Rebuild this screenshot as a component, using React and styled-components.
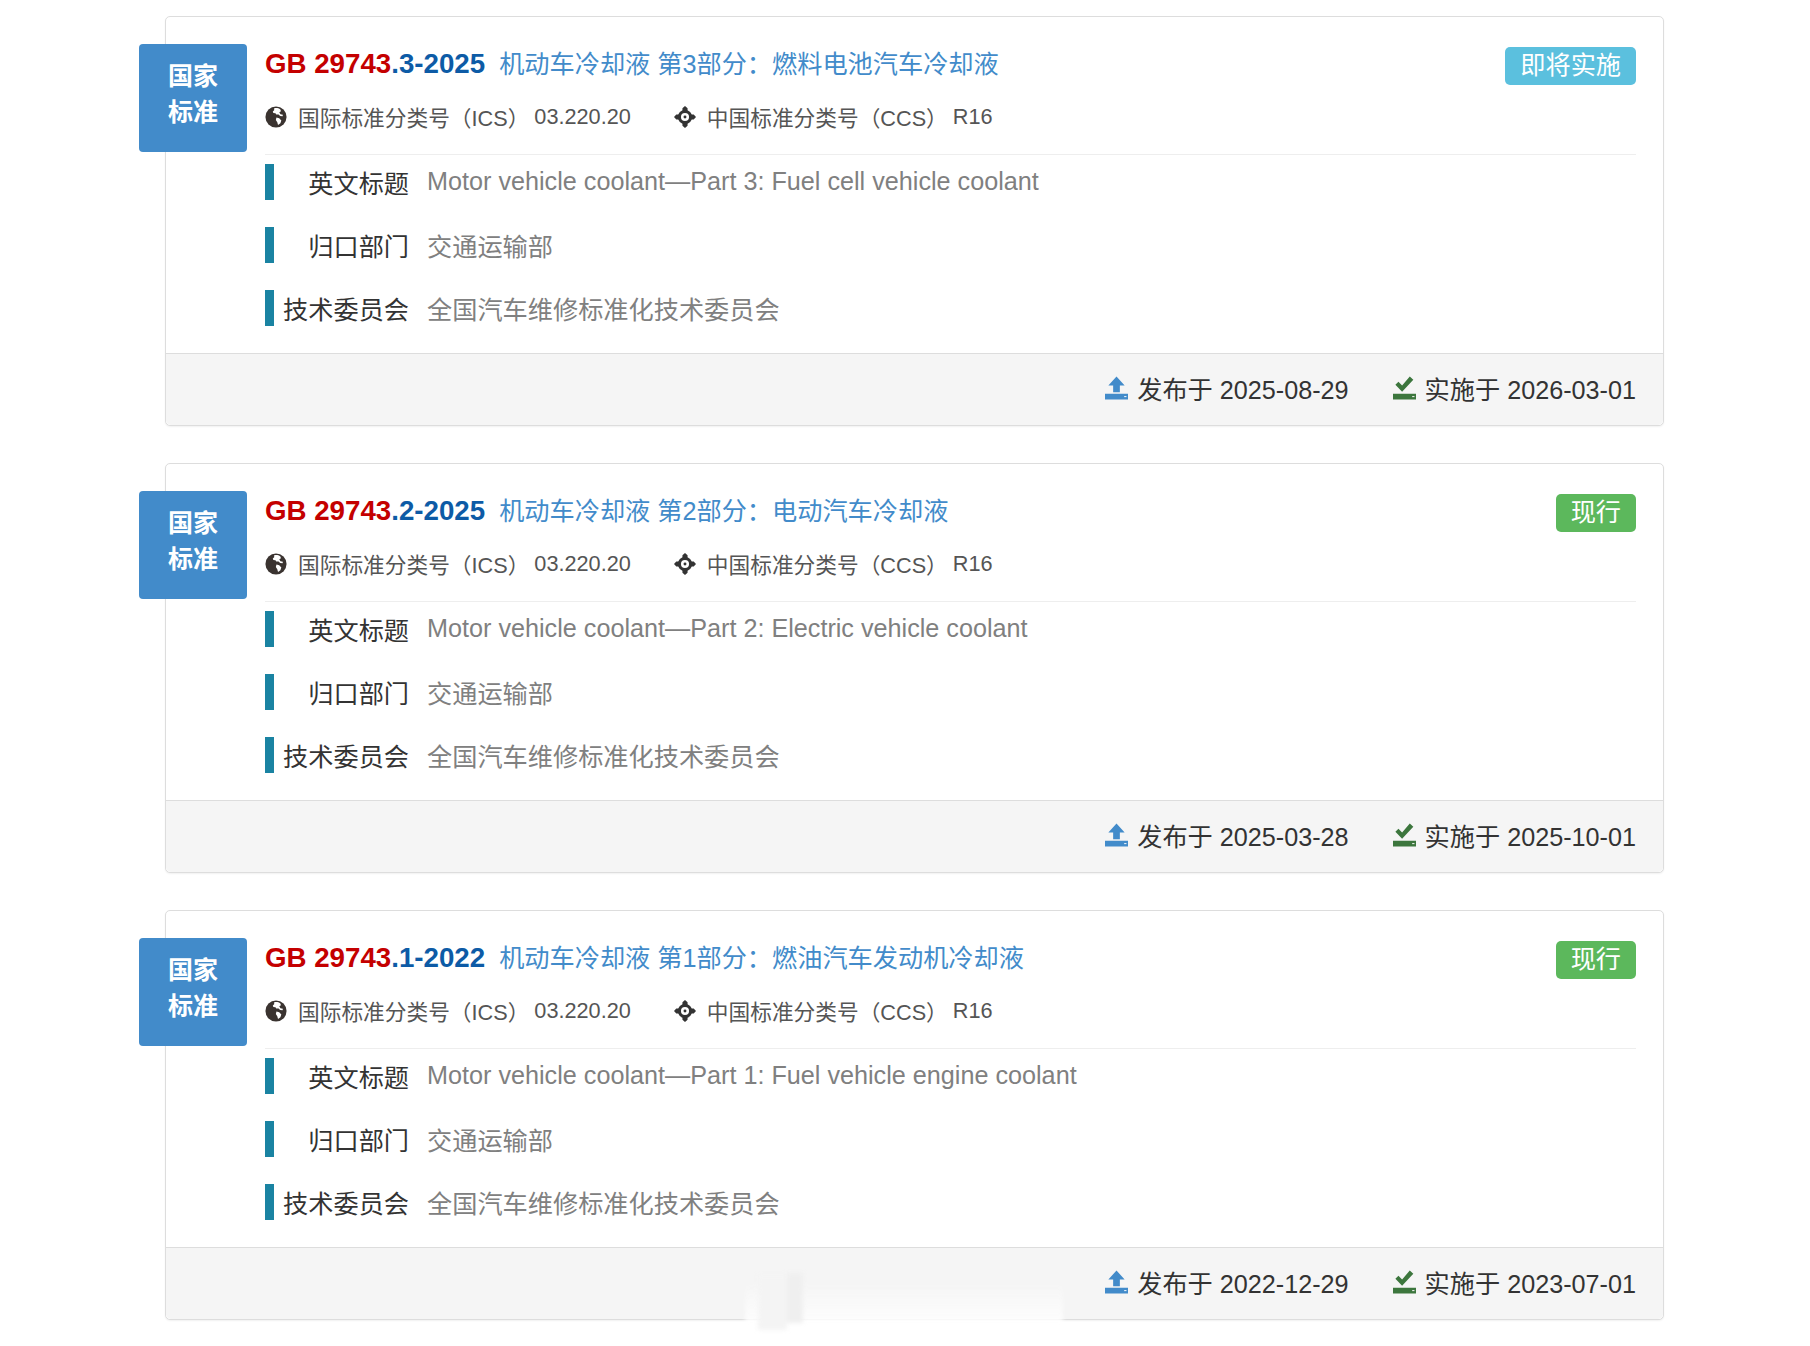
import React from 'react';
import styled, { createGlobalStyle } from 'styled-components';

const standards = [
  {
    prefix: 'GB 29743',
    suffix: '.3-2025',
    title: '机动车冷却液 第3部分：燃料电池汽车冷却液',
    english: 'Motor vehicle coolant—Part 3: Fuel cell vehicle coolant',
    status: '即将实施',
    tone: 'info',
    published: '2025-08-29',
    effective: '2026-03-01'
  },
  {
    prefix: 'GB 29743',
    suffix: '.2-2025',
    title: '机动车冷却液 第2部分：电动汽车冷却液',
    english: 'Motor vehicle coolant—Part 2: Electric vehicle coolant',
    status: '现行',
    tone: 'success',
    published: '2025-03-28',
    effective: '2025-10-01'
  },
  {
    prefix: 'GB 29743',
    suffix: '.1-2022',
    title: '机动车冷却液 第1部分：燃油汽车发动机冷却液',
    english: 'Motor vehicle coolant—Part 1: Fuel vehicle engine coolant',
    status: '现行',
    tone: 'success',
    published: '2022-12-29',
    effective: '2023-07-01'
  }
];

const GlobeIcon = () => (
  <MetaSvg viewBox="0 0 24 24">
    <circle cx="12" cy="12" r="11.500" fill="#3a3330" />
    <path
      d="M10 2.500c2.500-.5 5 0 6.800 1.200l.6 2-1.800 1.200 1.200 2 2.700.7-.3 1.600-2.600-.4-2.300-1.800-1.500.5-1.500-1.700-2.200-.2-.6-1.700 1.500-1.300z"
      fill="#fff"
    />
    <path d="M12.500 12.500l3 .8 2.300 2.500-1 3-2.600 2-.8-3-1.600-2.500z" fill="#fff" />
  </MetaSvg>
);

const ScreenshotIcon = () => (
  <MetaSvg viewBox="0 0 24 24">
    <path
      d="M12 0l2.800 2.500v2.100a7.900 7.900 0 0 1 4.600 4.600h2.100L24 12l-2.500 2.800h-2.100a7.900 7.900 0 0 1-4.600 4.600v2.100L12 24l-2.800-2.500v-2.100a7.900 7.900 0 0 1-4.600-4.600H2.500L0 12l2.500-2.800h2.100a7.900 7.900 0 0 1 4.600-4.600V2.500zm0 7.600a4.400 4.400 0 1 0 0 8.800 4.400 4.400 0 0 0 0-8.800z"
      fill="#333"
    />
    <circle cx="12" cy="12" r="1.600" fill="#333" />
  </MetaSvg>
);

const UploadIcon = () => (
  <DateSvg viewBox="0 0 24 24">
    <path d="M12 0l8.500 9.500H15.500V16.500h-7V9.500H3.500z" fill="#428bca" />
    <path d="M0 18h24v6H0z" fill="#428bca" />
    <path d="M20 20.500h2.400v1H20z" fill="#fff" />
  </DateSvg>
);

const SavedIcon = () => (
  <DateSvg viewBox="0 0 24 24">
    <path d="M2.500 8.500l3.200-3 3.800 3.800L17.500 0l3.700 3.300L9.500 16z" fill="#3c763d" />
    <path d="M0 18h24v6H0z" fill="#3c763d" />
    <path d="M20 20.500h2.400v1H20z" fill="#fff" />
  </DateSvg>
);

const StandardCard = ({ item }) => (
  <Card>
    <Body>
      <Tag>
        国家
        <br />
        标准
      </Tag>
      <Heading>
        <Code>
          <CodeRed>{item.prefix}</CodeRed>
          {item.suffix}
        </Code>
        <Title>{item.title}</Title>
        <Status tone={item.tone}>{item.status}</Status>
      </Heading>
      <Meta>
        <MetaItem>
          <GlobeIcon />
          <span>国际标准分类号（ICS）</span>
          <MetaValue>03.220.20</MetaValue>
        </MetaItem>
        <MetaItem>
          <ScreenshotIcon />
          <span>中国标准分类号（CCS）</span>
          <MetaValue>R16</MetaValue>
        </MetaItem>
      </Meta>
      <Details>
        <DetailRow>
          <DetailLabel>英文标题</DetailLabel>
          <DetailValue>{item.english}</DetailValue>
        </DetailRow>
        <DetailRow>
          <DetailLabel>归口部门</DetailLabel>
          <DetailValue>交通运输部</DetailValue>
        </DetailRow>
        <DetailRow>
          <DetailLabel>技术委员会</DetailLabel>
          <DetailValue>全国汽车维修标准化技术委员会</DetailValue>
        </DetailRow>
      </Details>
    </Body>
    <Footer>
      <DateItem>
        <UploadIcon />
        发布于 {item.published}
      </DateItem>
      <DateItem>
        <SavedIcon />
        实施于 {item.effective}
      </DateItem>
    </Footer>
  </Card>
);

const App = () => (
  <>
    <GlobalStyle />
    <Page>
      {standards.map(item => (
        <StandardCard item={item} key={item.suffix} />
      ))}
      <Smear />
    </Page>
  </>
);

const GlobalStyle = createGlobalStyle`
  html, body {
    margin: 0;
    background: #fff;
  }

  body {
    font-family: 'Liberation Sans', 'Noto Sans CJK SC', sans-serif;
    color: #333;
  }
`;

const Page = styled.div`
  position: relative;
  height: 1346px;
  box-sizing: border-box;
  padding: 16px 146px 0 165px;
  overflow: hidden;
`;

const Card = styled.section`
  margin-bottom: 37px;
  border: 1px solid #ddd;
  border-radius: 5px;
  background: #fff;
  box-shadow: 0 1px 2px rgba(0, 0, 0, 0.06);
`;

const Body = styled.div`
  position: relative;
  height: 336px;
  box-sizing: border-box;
  padding: 27px 27px 0 99px;
`;

const Tag = styled.div`
  position: absolute;
  top: 27px;
  left: -27px;
  width: 108px;
  height: 108px;
  box-sizing: border-box;
  padding-top: 14px;
  border-radius: 4px;
  background: #428bca;
  color: #fff;
  font-size: 25px;
  font-weight: 700;
  line-height: 36px;
  text-align: center;
`;

const Heading = styled.div`
  display: flex;
  align-items: baseline;
  height: 38px;
  padding-top: 1px;
  line-height: 38px;
  box-sizing: border-box;
`;

const Code = styled.span`
  color: #0d5ba6;
  font-size: 27.700px;
  font-weight: 700;
`;

const CodeRed = styled.span`
  color: #c40000;
`;

const Title = styled.span`
  margin-left: 14px;
  color: #428bca;
  font-size: 25.200px;
`;

const Status = styled.span`
  align-self: flex-start;
  margin: 2px 0 0 auto;
  padding: 0 15px;
  height: 38px;
  border-radius: 5px;
  background: ${props => (props.tone === 'info' ? '#5bc0de' : '#5cb85c')};
  color: #fff;
  font-size: 25.200px;
  line-height: 36px;
`;

const Meta = styled.div`
  display: flex;
  gap: 43px;
  height: 73px;
  align-items: center;
  box-sizing: border-box;
  padding-bottom: 3px;
  border-bottom: 1px solid #eee;
  color: #555;
  font-size: 21.700px;
`;

const MetaItem = styled.div`
  display: flex;
  align-items: center;
`;

const MetaSvg = styled.svg`
  width: 22px;
  height: 22px;
  margin-right: 11px;
`;

const MetaValue = styled.span`
  margin-left: 5px;
`;

const Details = styled.div`
  display: flex;
  flex-direction: column;
  gap: 27px;
  padding-top: 9px;
`;

const DetailRow = styled.div`
  display: flex;
  align-items: center;
  height: 36px;
  padding-bottom: 1px;
  box-sizing: border-box;
  border-left: 9px solid #1a83a2;
  font-size: 25.200px;
`;

const DetailLabel = styled.span`
  width: 135px;
  color: #333;
  text-align: right;
  white-space: nowrap;
`;

const DetailValue = styled.span`
  margin-left: 18px;
  color: #808080;
`;

const Footer = styled.div`
  display: flex;
  justify-content: flex-end;
  align-items: center;
  gap: 44px;
  height: 72px;
  box-sizing: border-box;
  padding: 0 27px 3px;
  border-top: 1px solid #ddd;
  border-radius: 0 0 5px 5px;
  background: #f5f5f5;
  font-size: 25.200px;
`;

const DateItem = styled.div`
  display: flex;
  align-items: center;
  white-space: pre;
`;

const DateSvg = styled.svg`
  width: 23px;
  height: 24px;
  margin-right: 9px;
`;

const Smear = styled.div`
  position: absolute;
  top: 1280px;
  left: 745px;
  width: 318px;
  height: 46px;
  background: linear-gradient(to bottom, rgba(255, 255, 255, 0), rgba(255, 255, 255, 0.75) 85%, #fff);
  filter: blur(2px);
  pointer-events: none;

  &::before {
    content: '';
    position: absolute;
    top: -5px;
    left: 13px;
    width: 29px;
    height: 55px;
    background: #f4f4f4;
  }

  &::after {
    content: '';
    position: absolute;
    top: -7px;
    left: 42px;
    width: 16px;
    height: 50px;
    background: #efefef;
  }
`;

export default App;
